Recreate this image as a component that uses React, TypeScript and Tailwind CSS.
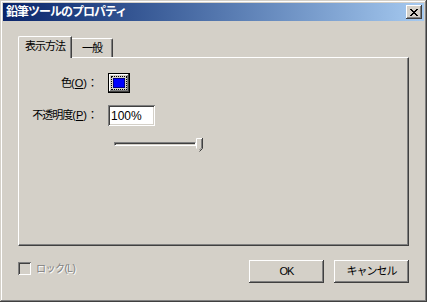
import React from "react";

// Classic Win2000-style property dialog
const raised =
  "shadow-[inset_-1px_-1px_#404040,inset_1px_1px_#ffffff,inset_-2px_-2px_#808080,inset_2px_2px_#d4d0c8]";
const sunken =
  "shadow-[inset_1px_1px_#808080,inset_-1px_-1px_#ffffff,inset_2px_2px_#404040,inset_-2px_-2px_#d4d0c8]";

function CloseButton() {
  return (
    <div className={`w-[16px] h-[14px] bg-[#d4d0c8] flex items-center justify-center ${raised}`}>
      <svg width="8" height="7" viewBox="0 0 8 7">
        <path d="M0 0h2v1h1v1h2V1h1V0h2v1H7v1H6v1H5v1h1v1h1v1h1v1H6V6H5V5H3v1H2v1H0V6h1V5h1V4h1V3H2V2H1V1H0z" fill="#000" />
      </svg>
    </div>
  );
}

function SliderThumb() {
  return (
    <svg width="7" height="14" viewBox="0 0 7 14" className="block">
      <path d="M0.5 0.5H6.5V10.5L3.5 13.5L0.5 10.5Z" fill="#d4d0c8" />
      <path d="M0.5 10.5V0.5H6" stroke="#fff" fill="none" />
      <path d="M6.5 0V10.5L3.5 13.5" stroke="#404040" fill="none" />
      <path d="M5.5 1V10L3.5 12" stroke="#808080" fill="none" />
    </svg>
  );
}

function PushButton({ label }: { label: string }) {
  return (
    <div
      className={`w-[75px] h-[23px] bg-[#d4d0c8] flex items-center justify-center text-[11px] tracking-[-1px] text-black ${raised}`}
    >
      {label}
    </div>
  );
}

export default function App() {
  return (
    <div
      className={`w-[427px] h-[302px] bg-[#d4d0c8] p-[3px] flex flex-col font-['Liberation_Sans','Noto_Sans_CJK_JP',sans-serif] text-black shadow-[inset_-1px_-1px_#404040,inset_1px_1px_#d4d0c8,inset_-2px_-2px_#808080,inset_2px_2px_#ffffff]`}
    >
      {/* Title bar */}
      <div className="h-[18px] flex items-center justify-between pl-[3px] pr-[2px] bg-linear-to-r from-[#0a246a] to-[#a6caf0]">
        <span className="text-white font-bold text-[12px] tracking-[-1px] leading-none">
          鉛筆ツールのプロパティ
        </span>
        <CloseButton />
      </div>

      <div className="flex-1 flex flex-col px-[15px] pt-[16px]">
        {/* Tabs */}
        <div className="flex items-end h-[21px] relative z-10 -mb-px">
          <div className="w-[54px] h-[22px] bg-[#d4d0c8] border-t border-l border-white rounded-tl-[2px] border-r border-r-[#404040] shadow-[inset_-1px_0_#808080] flex items-center justify-center text-[11px] tracking-[-1px] pb-[2px]">
            表示方法
          </div>
          <div className="w-[41px] h-[19px] bg-[#d4d0c8] border-t border-white border-r border-r-[#404040] rounded-tr-[2px] shadow-[inset_-1px_0_#808080] flex items-center justify-center text-[11px] tracking-[-1px] mb-px">
            一般
          </div>
        </div>

        {/* Tab panel */}
        <div className="h-[189px] border border-t-white border-l-white border-r-[#404040] border-b-[#404040] shadow-[inset_-1px_-1px_#808080] pt-[15px] flex flex-col">
          <div className="flex items-center h-[20px]">
            <span className="w-[78px] text-right text-[11px] tracking-[-1px]">
              色<span className="tracking-normal">(<span className="underline">O</span>)</span>：
            </span>
            <div className="ml-[11px] w-[22px] h-[20px] border border-black">
              <div className={`w-full h-full p-[2px] ${raised}`}>
                <div className="w-full h-full border border-dotted border-black p-px">
                  <div className="w-full h-full bg-[#0000ff] border border-[#000080]" />
                </div>
              </div>
            </div>
          </div>

          <div className="flex items-center h-[21px] mt-[12px]">
            <span className="w-[78px] text-right text-[11px] tracking-[-1px]">
              不透明度<span className="tracking-normal">(<span className="underline">P</span>)</span>：
            </span>
            <div className={`ml-[11px] w-[47px] h-[21px] bg-white flex items-center px-[3px] text-[12px] ${sunken}`}>
              100%
            </div>
          </div>

          <div className="flex items-start mt-[12px] ml-[95px]">
            <div className="w-[82px] h-[4px] mt-[4px] border-t border-l border-t-[#808080] border-l-[#808080] border-b border-r border-b-white border-r-white shadow-[inset_1px_1px_#404040]" />
            <SliderThumb />
          </div>
        </div>

        {/* Bottom row */}
        <div className="flex justify-between mt-[14px]">
          <div className="flex items-center gap-[5px] h-[15px] mt-px">
            <div className={`w-[13px] h-[13px] bg-[#d4d0c8] ${sunken}`} />
            <span className="text-[10px] tracking-[-0.5px] text-[#808080] [text-shadow:1px_1px_0_#ffffff]">ロック(L)</span>
          </div>
          <div className="flex gap-[10px]">
            <PushButton label="OK" />
            <PushButton label="キャンセル" />
          </div>
        </div>
      </div>
    </div>
  );
}
